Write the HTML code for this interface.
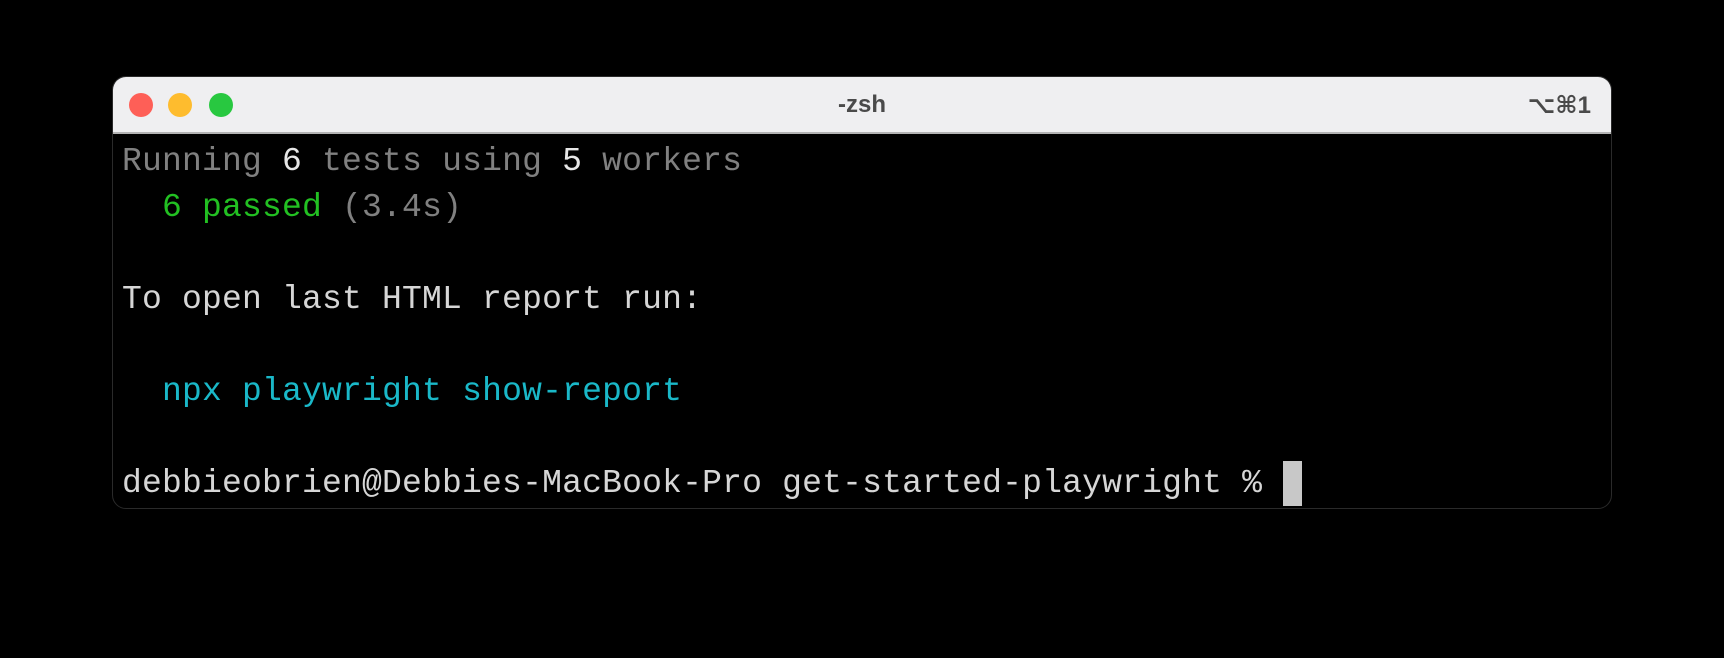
<!DOCTYPE html>
<html><head><meta charset="utf-8"><style>
html,body{margin:0;padding:0;background:#000;width:1724px;height:658px;overflow:hidden}
.win{position:absolute;left:112px;top:76px;width:1500px;height:433px;border-radius:14px;border:1px solid #2a2a2a;background:#000;overflow:hidden;box-sizing:border-box}
.tb{position:absolute;left:0;top:0;right:0;height:55px;background:#efeff1;border-bottom:2px solid #b3b3b3}
.dot{position:absolute;top:16px;width:24px;height:24px;border-radius:50%}
.title{position:absolute;left:0;right:0;top:14px;text-align:center;font:bold 24px "Liberation Sans",sans-serif;color:#4a4a4a}
.sc{position:absolute;right:20px;top:14px;font:bold 24px "Liberation Sans","DejaVu Sans",sans-serif;color:#4a4a4a}
.term{position:absolute;left:9px;top:62px;font-family:"Liberation Mono",monospace;font-size:33px;letter-spacing:0.2px;line-height:46px;color:#d6d6d6;white-space:pre}
.g{color:#808080}.w{color:#e6e6e6}.gr{color:#22c022}.c{color:#1ab8c8}
.cur{position:absolute;left:1170px;top:384px;width:19px;height:45px;background:#c8c8c8}
</style></head><body>
<div class="win">
<div class="tb">
<div class="dot" style="left:16px;background:#fe5f57"></div>
<div class="dot" style="left:55px;background:#febc2e"></div>
<div class="dot" style="left:96px;background:#28c840"></div>
<div class="title">-zsh</div>
<div class="sc">⌥⌘1</div>
</div>
<div class="term"><span class="g">Running </span><span class="w">6</span><span class="g"> tests using </span><span class="w">5</span><span class="g"> workers</span>
  <span class="gr">6 passed</span><span class="g"> (3.4s)</span>

To open last HTML report run:

  <span class="c">npx playwright show-report</span>

debbieobrien@Debbies-MacBook-Pro get-started-playwright % </div>
<div class="cur"></div>
</div>
</body></html>
